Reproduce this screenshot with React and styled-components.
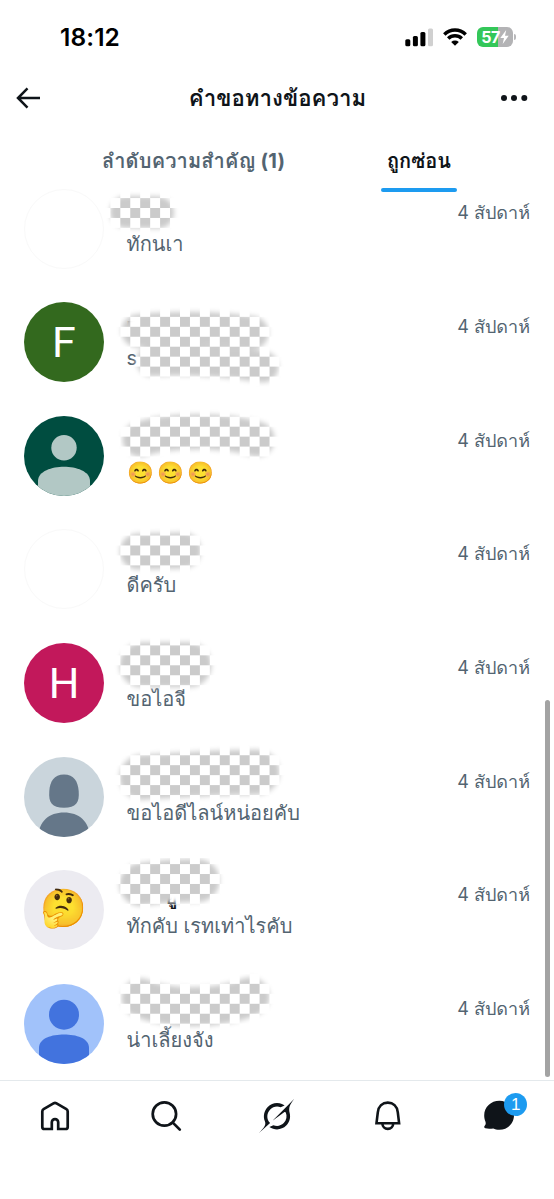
import React from 'react';
import styled, { createGlobalStyle } from 'styled-components';

const ROW_HEIGHT = 113.66;
const LIST_TOP = 188.5;

const rows = [
  { avatar: { type: 'empty' }, text: 'ทักนเา', strokes: [{ d: 'M126 211.5 L158 212', w: 32 }] },
  {
    avatar: { type: 'letter', letter: 'F', color: '#33691e' },
    name: 'F',
    text: 's',
    strokes: [
      { d: 'M138 331 C160 328 215 327 252 333', w: 33 },
      { d: 'M152 361 C185 359 225 361 263 367', w: 31 },
    ],
  },
  {
    avatar: { type: 'person', color: '#004d40', fill: '#b2c8c5' },
    text: '😊😊😊',
    emoji: true,
    strokes: [{ d: 'M140 439 C170 429 225 429 257 439', w: 35 }],
  },
  { avatar: { type: 'empty' }, text: 'ดีครับ', strokes: [{ d: 'M138 552 L183 551', w: 36 }] },
  {
    avatar: { type: 'letter', letter: 'H', color: '#c2185b' },
    text: 'ขอไอจี',
    strokes: [{ d: 'M142 665 L189 665', w: 45 }],
  },
  {
    avatar: { type: 'egg', color: '#cad5dc', fill: '#657789' },
    text: 'ขอไอดีไลน์หน่อยคับ',
    strokes: [{ d: 'M142 777 C180 775 220 772 257 772', w: 45 }],
  },
  {
    avatar: { type: 'emoji', letter: '🤔', color: '#ecebf1' },
    name: 'อู',
    indent: 39,
    text: 'ทักคับ เรทเท่าไรคับ',
    strokes: [{ d: 'M141 885 C160 882 180 881 198 881', w: 43 }],
  },
  {
    avatar: { type: 'user', color: '#a1c2fa', fill: '#4273de' },
    text: 'น่าเลี้ยงจัง',
    strokes: [{ d: 'M141 998 C165 1009 215 1011 250 997', w: 39 }],
  },
];

const Avatar = ({ type, letter, color, fill }) => {
  if (type === 'empty') return <Circle $color="#fff" $line />;
  if (type === 'letter') return <Circle $color={color}><Letter>{letter}</Letter></Circle>;
  if (type === 'emoji') return <Circle $color={color}><Face>{letter}</Face></Circle>;

  return (
    <Circle $color={color}>
      <svg width="80" height="80" viewBox="0 0 80 80" fill={fill}>
        {type === 'person' && (
          <>
            <circle cx="40" cy="31.7" r="12.7" />
            <path d="M14 80V65C14 55 28 50.7 40 50.7S66 55 66 65V80Z" />
          </>
        )}
        {type === 'user' && (
          <>
            <circle cx="40" cy="30.7" r="15" />
            <path d="M15 80V64C15 54 28 50.5 40 50.5S65 54 65 64V80Z" />
          </>
        )}
        {type === 'egg' && (
          <>
            <path d="M40 17.5C50 17.5 54 24.5 54.7 34C55.6 46 52 50.7 40 50.7S24.4 46 25.3 34C26 24.5 30 17.5 40 17.5Z" />
            <path d="M14 80C15 64 25 55.5 40 55.5S65 64 66 80Z" />
          </>
        )}
      </svg>
    </Circle>
  );
};

// 이름을 지운 체크무늬 자국
const Scribble = ({ index, strokes }) => (
  <ScribbleLayer viewBox={`104 ${LIST_TOP + index * ROW_HEIGHT - 12} 200 100`}>
    <defs>
      <pattern id={`check${index}`} x="0.9" y="8.4" width="19.9" height="19.91" patternUnits="userSpaceOnUse">
        <rect width="19.9" height="19.91" fill="#fff" />
        <rect x="9.95" width="9.95" height="9.955" fill="#cbcbcb" />
        <rect y="9.955" width="9.95" height="9.955" fill="#cbcbcb" />
      </pattern>
      <filter id={`soft${index}`} filterUnits="userSpaceOnUse" x="90" y="150" width="240" height="920">
        <feGaussianBlur stdDeviation="2.6" />
      </filter>
      <mask id={`mask${index}`} maskUnits="userSpaceOnUse" x="90" y="150" width="240" height="920">
        <g filter={`url(#soft${index})`} fill="none" stroke="#fff" strokeLinecap="round">
          {strokes.map((s) => <path key={s.d} d={s.d} strokeWidth={s.w} />)}
        </g>
      </mask>
    </defs>
    <rect x="90" y="150" width="240" height="920" fill={`url(#check${index})`} mask={`url(#mask${index})`} />
  </ScribbleLayer>
);

const App = () => {
  return (
    <Screen>
      <GlobalStyle />
      <StatusBar>
        <Clock>18:12</Clock>
        <StatusIcons>
          <svg width="28" height="19" viewBox="0 0 28 19">
            <rect x="0.3" y="11.2" width="5" height="7" rx="1.5" />
            <rect x="7.9" y="8" width="5" height="10.2" rx="1.5" />
            <rect x="15.4" y="4" width="5" height="14.2" rx="1.5" />
            <rect x="23" y="0.5" width="5" height="17.7" rx="1.5" fill="#d0d0d0" />
          </svg>
          <svg width="24" height="18" viewBox="0 0 24 18" fill="none" stroke="#000" strokeWidth="3.5">
            <path d="M1.3 6.4a15.4 15.4 0 0 1 21.4 0" />
            <path d="M5.2 10.6a9.8 9.8 0 0 1 13.6 0" />
            <path d="M12 17.8L8.2 13.9a5.6 5.6 0 0 1 7.6 0Z" fill="#000" stroke="none" />
          </svg>
          <Battery>
            <BatteryLevel>
              57
              <svg width="9" height="14" viewBox="0 0 9 14" fill="#fff"><path d="M6.2 0L0.3 8H4L2.7 14L8.7 5.7H5Z" /></svg>
            </BatteryLevel>
            <BatteryTip />
          </Battery>
        </StatusIcons>
      </StatusBar>

      <Header>
        <svg width="24" height="22" viewBox="0 0 24 22" fill="none" stroke="#0f1419" strokeWidth="2.5">
          <path d="M11.5 1.4L2 11l9.5 9.6M2 11h22" />
        </svg>
        <Title>คำขอทางข้อความ</Title>
        <svg width="28" height="8" viewBox="0 0 28 8" fill="#0f1419">
          <circle cx="4" cy="4" r="3" />
          <circle cx="14" cy="4" r="3" />
          <circle cx="24.3" cy="4" r="3" />
        </svg>
      </Header>

      <Tabs>
        <Tab $spacing="0.17px">ลำดับความสำคัญ (1)</Tab>
        <Tab $active>ถูกซ่อน</Tab>
      </Tabs>

      <List>
        {rows.map((row, i) => (
          <Row key={i}>
            <Avatar {...row.avatar} />
            <Body>
              <Name $indent={row.indent}>{row.name}</Name>
              <Preview $emoji={row.emoji}>{row.text}</Preview>
            </Body>
            <Time>4 สัปดาห์</Time>
            <Scribble index={i} strokes={row.strokes} />
          </Row>
        ))}
        <ScrollThumb />
      </List>

      <BottomNav>
        <NavItem>
          <svg width="36" height="36" viewBox="0 0 36 36" fill="none" stroke="#0f1419" strokeWidth="2.7">
            <path d="M16.9 5.2L6.6 11.2Q5.3 12 5.3 13.5V28.9Q5.3 31 7.4 31H14.8V24.3a3.2 3.2 0 0 1 6.4 0V31H28.6Q30.7 31 30.7 28.9V13.5Q30.7 12 29.4 11.2L19.1 5.2Q18 4.6 16.9 5.2Z" />
          </svg>
        </NavItem>
        <NavItem>
          <svg width="36" height="36" viewBox="0 0 36 36" fill="none" stroke="#0f1419" strokeWidth="2.7">
            <circle cx="16.4" cy="16" r="11.7" />
            <path d="M24.8 24.6L31.8 31.6" strokeLinecap="round" />
          </svg>
        </NavItem>
        <NavItem>
          <svg width="35" height="34" viewBox="0 0 33 32" fill="#0f1419">
            <path d="M12.745 20.54l10.97-8.19c.539-.4 1.307-.244 1.564.38 1.349 3.288.746 7.241-1.938 9.955-2.683 2.714-6.417 3.31-9.83 1.954l-3.728 1.745c5.347 3.697 11.84 2.782 15.898-1.324 3.219-3.255 4.216-7.692 3.284-11.693l.008.009c-1.351-5.878.332-8.227 3.782-13.031L33 0l-4.54 4.59v-.014L12.743 20.544m-2.263 1.987c-3.837-3.707-3.175-9.446.1-12.755 2.42-2.449 6.388-3.448 9.852-1.979l3.72-1.737c-.67-.49-1.53-1.017-2.515-1.387-4.455-1.854-9.789-.931-13.41 2.728-3.483 3.523-4.579 8.94-2.697 13.561 1.405 3.454-.899 5.898-3.22 8.364C1.49 30.2.666 31.074 0 32l10.478-9.466" />
          </svg>
        </NavItem>
        <NavItem>
          <svg width="36" height="36" viewBox="0 0 36 36" fill="none" stroke="#0f1419" strokeWidth="2.6">
            <path d="M6.5 25.2L7.8 14.3C8.4 8.3 12.5 4.6 17.8 4.6S27.2 8.3 27.8 14.3L29.1 25.2Z" />
            <path d="M12.4 25.5a5.4 5.4 0 0 0 10.8 0" />
          </svg>
        </NavItem>
        <NavItem>
          <svg width="36" height="36" viewBox="0 0 36 36" fill="#0f1419">
            <path d="M18.4 2.8C26.5 2.8 33 9 33 17.3S26.5 31.8 18.4 31.8C15.8 31.8 14 31.2 12.3 30.4C10 30.6 6.8 30.9 4.4 30.2C3 29.8 2.8 28.9 3.9 27.5C4.9 26.2 4.9 25 4.4 23.4C3.6 21.5 3.2 19.6 3.2 17.3C3.2 9 10 2.8 18.4 2.8Z" />
          </svg>
          <Badge>1</Badge>
        </NavItem>
      </BottomNav>
    </Screen>
  );
};

const GlobalStyle = createGlobalStyle`
  * {
    box-sizing: border-box;
  }
  body {
    margin: 0;
    background-color: #fff;
  }
  svg {
    display: block;
    flex-shrink: 0;
  }
`;

const Screen = styled.div`
  display: flex;
  flex-direction: column;
  width: 554px;
  height: 1199px;
  overflow: hidden;
  background-color: #fff;
  color: #0f1419;
  font-family: Inter, Loma, "Noto Sans", sans-serif;
`;

const StatusBar = styled.div`
  display: flex;
  justify-content: space-between;
  align-items: center;
  height: 74px;
  padding: 0 38px 0 60px;
`;

const Clock = styled.div`
  font-size: 24.5px;
  font-weight: 600;
  letter-spacing: 0.1px;
  color: #000;
`;

const StatusIcons = styled.div`
  display: flex;
  align-items: center;
  gap: 10px;
`;

const Battery = styled.div`
  display: flex;
  align-items: center;
  gap: 1px;
`;

const BatteryLevel = styled.div`
  display: flex;
  align-items: center;
  justify-content: center;
  width: 36px;
  height: 20px;
  border-radius: 6px;
  background: linear-gradient(to right, #34c759 58%, #b3b3b5 58%);
  color: #fff;
  font-size: 16px;
  font-weight: 700;
  letter-spacing: -0.5px;
`;

const BatteryTip = styled.div`
  width: 2px;
  height: 6px;
  border-radius: 0 2px 2px 0;
  background-color: #b8b8ba;
`;

const Header = styled.div`
  display: grid;
  grid-template-columns: 28px 1fr 28px;
  justify-items: center;
  align-items: center;
  height: 48px;
  padding: 0 26px 0 14px;
`;

const Title = styled.div`
  padding-left: 13px;
  font-size: 22.3px;
  font-weight: 700;
  line-height: 30px;
`;

const Tabs = styled.div`
  display: flex;
  height: 66.5px;
  padding: 19px 97px 0 102px;
  justify-content: space-between;
`;

const Tab = styled.div`
  display: flex;
  flex-direction: column;
  justify-content: space-between;
  height: 51px;
  padding: 5px ${(props) => (props.$active ? '6px' : '0')} 0;
  font-size: 20px;
  font-weight: 700;
  line-height: 30px;
  letter-spacing: ${(props) => props.$spacing || '0'};
  color: ${(props) => (props.$active ? '#0f1419' : '#536471')};

  &::after {
    content: "";
    height: 4.5px;
    margin: 0 -6px;
    border-radius: 3px;
    background-color: ${(props) => (props.$active ? '#1d9bf0' : 'transparent')};
  }
`;

const List = styled.div`
  position: relative;
  height: 891.5px;
  flex-shrink: 0;
`;

const Row = styled.div`
  position: relative;
  display: flex;
  height: ${ROW_HEIGHT}px;
  padding: 0 24px;
`;

const Circle = styled.div`
  display: flex;
  align-items: center;
  justify-content: center;
  flex-shrink: 0;
  width: 80px;
  height: 80px;
  overflow: hidden;
  border-radius: 50%;
  border: ${(props) => (props.$line ? '1px solid #f9f9f9' : 'none')};
  background-color: ${(props) => props.$color};
`;

const Letter = styled.span`
  font-family: Roboto, sans-serif;
  font-size: 43px;
  line-height: 80px;
  color: #fff;
`;

const Face = styled.span`
  margin: -4px 2px 0 0;
  font-size: 37.5px;
  line-height: 80px;
`;

const Body = styled.div`
  flex: 1;
  padding: 12.8px 0 0 22.5px;
`;

const Name = styled.div`
  height: 28px;
  padding-left: ${(props) => props.$indent || 0}px;
  font-size: 20px;
  font-weight: 700;
  line-height: 28px;
`;

const Preview = styled.div`
  font-size: ${(props) => (props.$emoji ? '21.5px' : '20px')};
  line-height: 30px;
  color: #536471;
  white-space: nowrap;
  letter-spacing: ${(props) => (props.$emoji ? '3.2px' : '0')};
`;

const Time = styled.div`
  padding-top: 10.8px;
  font-size: 18px;
  line-height: 28px;
  color: #536471;
`;

const ScribbleLayer = styled.svg`
  position: absolute;
  left: 104px;
  top: -12px;
  width: 200px;
  height: 100px;
  pointer-events: none;
`;

const ScrollThumb = styled.div`
  position: absolute;
  right: 4px;
  bottom: 3px;
  width: 5px;
  height: 377px;
  border-radius: 3px;
  background-color: #a3a3a3;
`;

const BottomNav = styled.div`
  display: grid;
  grid-template-columns: repeat(5, 1fr);
  flex: 1;
  padding-top: 17px;
  border-top: 1px solid #e4e9ec;
  background-color: #fff;
  z-index: 1;
`;

const NavItem = styled.div`
  position: relative;
  display: flex;
  align-items: center;
  justify-content: center;
  height: 36px;
`;

const Badge = styled.div`
  position: absolute;
  top: -5px;
  left: 61px;
  width: 23px;
  height: 23px;
  border-radius: 50%;
  background-color: #1d9bf0;
  color: #fff;
  font-family: "Liberation Sans", sans-serif;
  font-size: 17px;
  line-height: 23px;
  text-align: center;
`;

export default App;
